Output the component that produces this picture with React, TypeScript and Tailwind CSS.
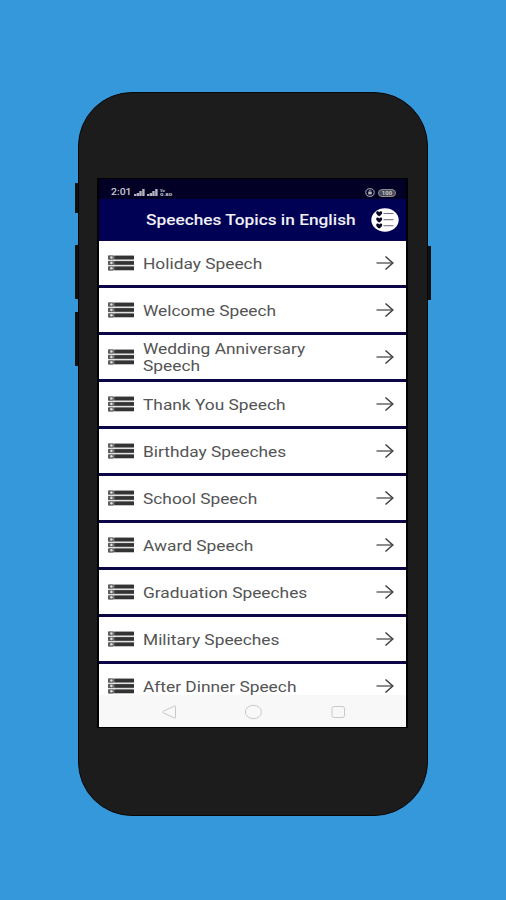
const TOPICS = [
  "Holiday Speech",
  "Welcome Speech",
  "Wedding Anniversary Speech",
  "Thank You Speech",
  "Birthday Speeches",
  "School Speech",
  "Award Speech",
  "Graduation Speeches",
  "Military Speeches",
  "After Dinner Speech",
]

function ListIcon() {
  return (
    <svg width="26" height="16" viewBox="0 0 26 16" className="shrink-0">
      {[0.2, 5.6, 11].map((y) => (
        <g key={y}>
          <rect x="0" y={y + 0.2} width="26" height="4.4" rx="0.6" fill="#8a8a8a" />
          <rect x="0" y={y + 0.4} width="5.6" height="4" rx="0.8" fill="#5c5c5c" />
          <circle cx="3.4" cy={y + 2.3} r="1.3" fill="#dddddd" />
          <rect x="6.4" y={y + 0.6} width="19.6" height="3.4" fill="#333333" />
        </g>
      ))}
    </svg>
  )
}

function ArrowIcon() {
  return (
    <svg width="18" height="16" viewBox="0 0 18 16" fill="none" stroke="#404040" strokeWidth="1.5" className="shrink-0">
      <path d="M0.5 8H16.5" stroke="#666666" />
      <path d="M9.5 1.5L16.8 8L9.5 14.5" />
    </svg>
  )
}

function SignalIcon() {
  return (
    <svg width="11" height="7" viewBox="0 0 11 7" fill="#b4b4c0">
      <rect x="0" y="5" width="2.4" height="2" />
      <rect x="2.7" y="4" width="2.4" height="3" />
      <rect x="5.3" y="2" width="2.4" height="5" />
      <rect x="8.2" y="0" width="2.4" height="7" />
    </svg>
  )
}

function StatusBar() {
  return (
    <div className="flex h-5 shrink-0 items-center justify-between bg-[#020024] pt-[7px] pr-[10px] pl-3 text-[#c9c9d2]">
      <div className="flex items-center">
        <span className="w-[23px] origin-left scale-x-[1.16] text-[9px] leading-none font-medium">2:01</span>
        <SignalIcon />
        <span className="w-[2px]" />
        <SignalIcon />
        <span className="ml-[2px] flex w-4 flex-col text-[4px] leading-[4px] font-bold">
          <span className="h-1">Vo</span>
          <span className="h-1 origin-left scale-x-[1.5]">0.80</span>
        </span>
      </div>
      <div className="flex items-center gap-[3px]">
        <svg width="10" height="9" viewBox="0 0 10 9" fill="none" stroke="#b4b4bc">
          <ellipse cx="5" cy="4.5" rx="4.2" ry="3.8" />
          <rect x="3.2" y="4" width="3.6" height="2.4" fill="#b4b4bc" stroke="none" />
          <path d="M4 4V2.8H6V4" strokeWidth="0.8" />
        </svg>
        <span className="flex h-2 w-[18px] items-center justify-center rounded-full border border-[#8c8c96] bg-[#4a4a55] text-[6px] leading-none font-bold">
          100
        </span>
      </div>
    </div>
  )
}

function Heart({ y }: { y: number }) {
  return (
    <path
      transform={`translate(5.2 ${y})`}
      d="M3 5C1.2 3.8 0 2.8 0 1.5C0 0 2.2 -0.4 3 1C3.8 -0.4 6 0 6 1.5C6 2.8 4.8 3.8 3 5Z"
      fill="#050522"
    />
  )
}

function Header() {
  return (
    <div className="flex h-[41px] shrink-0 items-center bg-[#000055] pr-[7px] pl-[47px]">
      <h1 className="w-[225px] origin-left scale-x-[1.115] pt-0.5 text-[15.5px] leading-none font-medium whitespace-nowrap text-[#f0f0f6]">
        Speeches Topics in English
      </h1>
      <svg width="28" height="24" viewBox="0 0 28 24" className="shrink-0">
        <ellipse cx="14" cy="12" rx="13.7" ry="11.7" fill="#ffffff" />
        {[3.2, 9.4, 15.4].map((y) => (
          <g key={y}>
            <Heart y={y} />
            <path d={`M12.5 ${y + 2.3}H22.5`} stroke="#777783" strokeWidth="1.1" />
          </g>
        ))}
      </svg>
    </div>
  )
}

function TopicRow({ name }: { name: string }) {
  return (
    <li className="flex h-11 shrink-0 items-center bg-white pr-3 pl-[9px]">
      <ListIcon />
      <span className="ml-[9px] w-[150px] origin-left scale-x-[1.155] pt-0.5 text-[15px] leading-[17px] text-[#545454]">
        {name}
      </span>
      <span className="ml-auto flex">
        <ArrowIcon />
      </span>
    </li>
  )
}

function NavBar() {
  return (
    <div className="flex h-8 shrink-0 items-center justify-between bg-[#f8f8f8] pt-px pr-[60px] pl-[61px]">
      <svg width="18" height="16" viewBox="0 0 18 16" fill="none" stroke="#c9c9c9">
        <path d="M15.5 2.4V13.6Q15.5 14.6 14.5 14L3.2 8.8Q2.2 8 3.2 7.3L14.5 2Q15.5 1.5 15.5 2.4Z" />
      </svg>
      <svg width="18" height="16" viewBox="0 0 18 16" fill="none" stroke="#c9c9c9">
        <ellipse cx="8.4" cy="8" rx="8" ry="6.7" />
      </svg>
      <svg width="16" height="16" viewBox="0 0 16 16" fill="none" stroke="#c9c9c9">
        <rect x="2" y="2.5" width="12.5" height="11" rx="2" />
      </svg>
    </div>
  )
}

export default function App() {
  return (
    <div className="flex h-[900px] w-[506px] justify-center overflow-hidden bg-[#3498db] pt-[92px] font-[Roboto,'Liberation_Sans',sans-serif]">
      <div className="relative h-[724px] w-[350px] rounded-[54px] border border-[#080808] bg-[#1c1c1c]">
        {/* side buttons */}
        <span className="absolute top-[90px] -left-[4px] h-[30px] w-[3px] bg-[#101010]" />
        <span className="absolute top-[152px] -left-[4px] h-[54px] w-[3px] bg-[#101010]" />
        <span className="absolute top-[219px] -left-[4px] h-[54px] w-[3px] bg-[#101010]" />
        <span className="absolute top-[153px] -right-[4px] h-[54px] w-[3px] bg-[#101010]" />

        <div className="mt-[85px] ml-[18px] flex h-[550px] w-[311px] flex-col border-x-2 border-t border-b border-black">
          <StatusBar />
          <Header />
          <ul className="flex min-h-0 flex-1 flex-col gap-[3px] overflow-hidden bg-[#0b0645] pt-px">
            {TOPICS.map((name) => (
              <TopicRow key={name} name={name} />
            ))}
          </ul>
          <NavBar />
        </div>
      </div>
    </div>
  )
}
